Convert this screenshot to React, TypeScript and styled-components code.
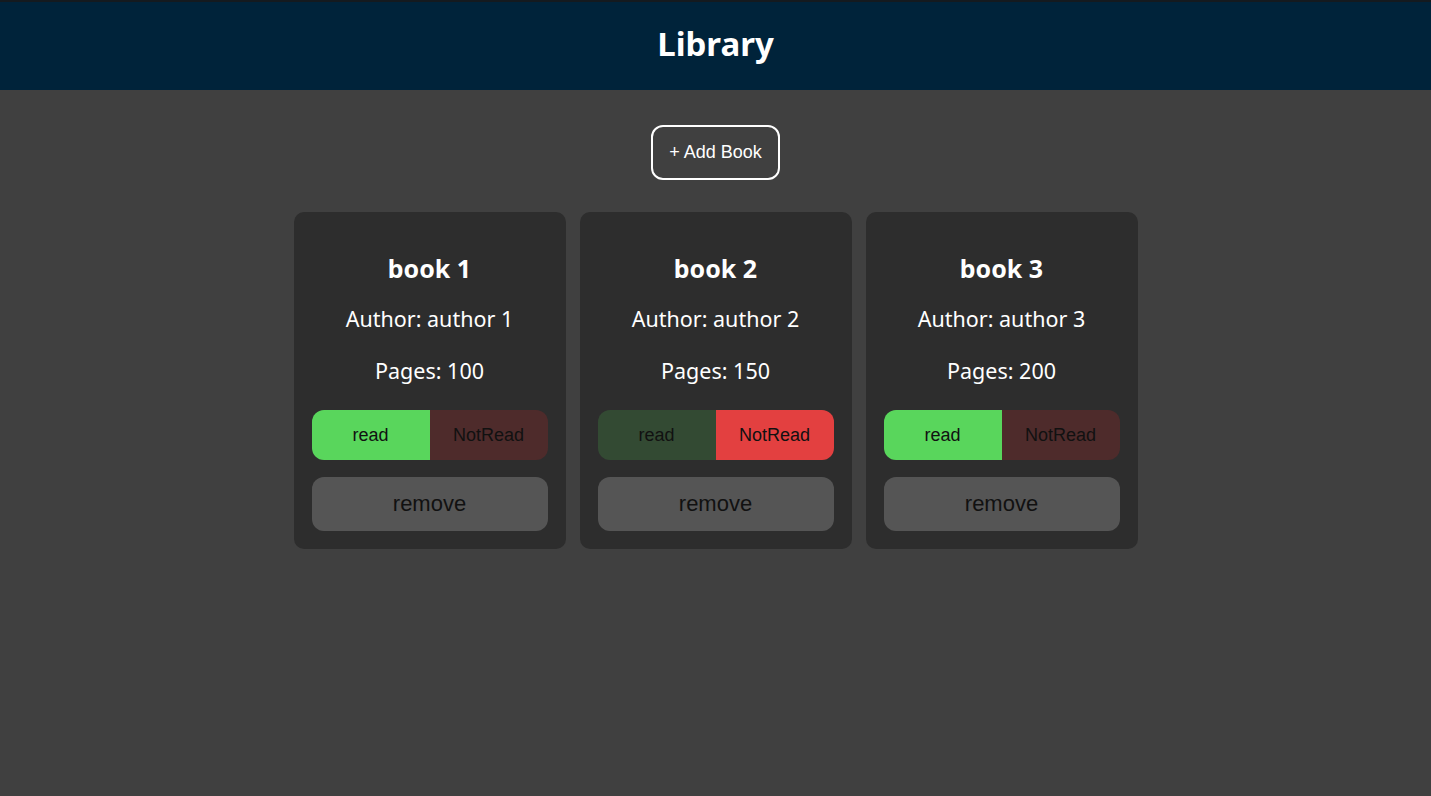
import React from 'react';
import styled, { createGlobalStyle } from 'styled-components';

const GlobalStyle = createGlobalStyle`
  html, body {
    margin: 0;
    padding: 0;
    background-color: #404040;
    font-family: "Noto Sans", "Open Sans", sans-serif;
  }
`;

const Page = styled.div`
  min-height: 100vh;
  background-color: #404040;
`;

const Header = styled.header`
  height: 90px;
  box-sizing: border-box;
  padding-bottom: 5px;
  background-color: #00233a;
  border-top: 2px solid #141a1f;
  display: flex;
  justify-content: center;
  align-items: center;
`;

const Title = styled.h1`
  margin: 0;
  color: white;
  font-size: 33px;
  font-weight: bold;
`;

const Main = styled.main`
  display: flex;
  flex-direction: column;
  align-items: center;
  padding-top: 35px;
`;

const AddButton = styled.button`
  width: 129px;
  height: 55px;
  border: 2px solid white;
  border-radius: 12px;
  background: transparent;
  color: white;
  font-family: "Liberation Sans", Arial, sans-serif;
  font-size: 18px;
  cursor: pointer;
`;

const Grid = styled.div`
  margin-top: 32px;
  display: grid;
  grid-template-columns: repeat(3, 272px);
  gap: 14px;
`;

const Card = styled.div`
  background-color: #2d2d2d;
  border-radius: 10px;
  padding: 18px;
  display: flex;
  flex-direction: column;
  align-items: center;
  color: white;
`;

const BookTitle = styled.h2`
  margin: 22px 0 0;
  font-size: 25px;
  font-weight: bold;
  line-height: 32px;
`;

const Info = styled.p<{ $gap: number }>`
  margin: ${props => props.$gap}px 0 0;
  font-size: 21.5px;
  line-height: 28px;
`;

const Toggle = styled.div`
  margin-top: 25px;
  width: 100%;
  height: 50px;
  display: flex;
  border-radius: 12px;
  overflow: hidden;
`;

const ToggleButton = styled.button<{ $bg: string }>`
  flex: 1;
  border: none;
  background-color: ${props => props.$bg};
  color: #111;
  font-family: "Liberation Sans", Arial, sans-serif;
  font-size: 18px;
  cursor: pointer;
`;

const RemoveButton = styled.button`
  margin-top: 17px;
  width: 100%;
  height: 54px;
  border: none;
  border-radius: 12px;
  background-color: #555555;
  color: #111;
  font-family: "Liberation Sans", Arial, sans-serif;
  font-size: 22px;
  cursor: pointer;
`;

interface Book {
  title: string;
  author: string;
  pages: number;
  read: boolean;
}

const books: Book[] = [
  { title: 'book 1', author: 'author 1', pages: 100, read: true },
  { title: 'book 2', author: 'author 2', pages: 150, read: false },
  { title: 'book 3', author: 'author 3', pages: 200, read: true },
];

export default function App() {
  return (
    <Page>
      <GlobalStyle />
      <Header>
        <Title>Library</Title>
      </Header>
      <Main>
        <AddButton>+ Add Book</AddButton>
        <Grid>
          {books.map(book => (
            <Card key={book.title}>
              <BookTitle>{book.title}</BookTitle>
              <Info $gap={21}>Author: {book.author}</Info>
              <Info $gap={24}>Pages: {book.pages}</Info>
              <Toggle>
                <ToggleButton $bg={book.read ? '#59d65c' : '#334a33'}>read</ToggleButton>
                <ToggleButton $bg={book.read ? '#4e2b2b' : '#e34040'}>NotRead</ToggleButton>
              </Toggle>
              <RemoveButton>remove</RemoveButton>
            </Card>
          ))}
        </Grid>
      </Main>
    </Page>
  );
}
